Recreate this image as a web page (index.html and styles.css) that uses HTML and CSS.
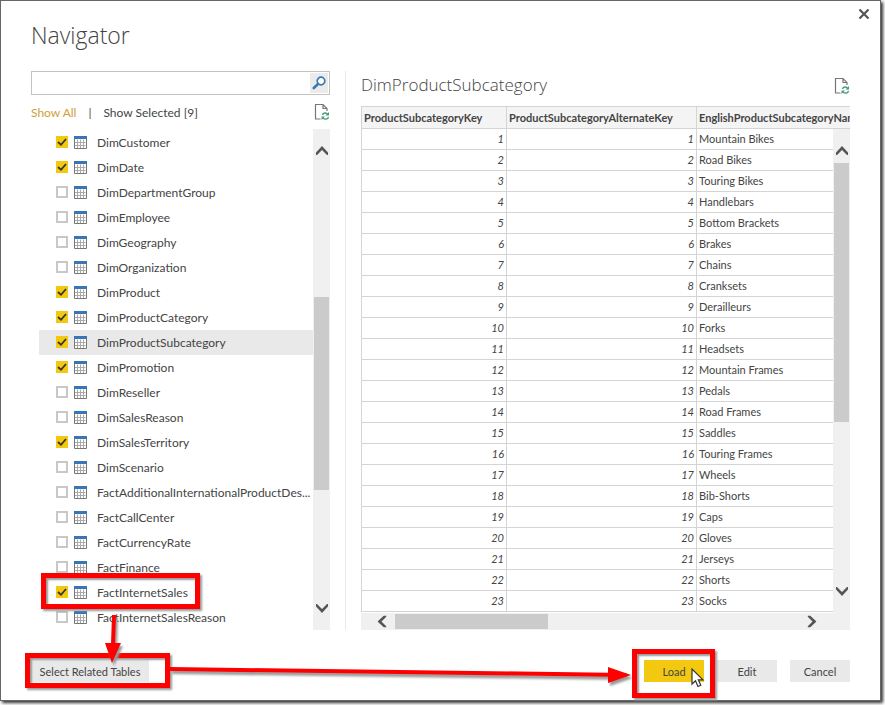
FILE: index.html
```
<!DOCTYPE html>
<html lang="en">
<head>
    <meta charset="UTF-8">
    <meta name="viewport" content="width=device-width, initial-scale=1.0">
    <title>Navigator</title>
    <link rel="stylesheet" href="styles.css">
</head>
<body>
    <!-- Shared icons -->
    <svg class="sprite" aria-hidden="true">
        <symbol id="icon-table" viewBox="0 0 13 13">
            <path d="M0 0h13v13H0z" fill="#fff"/>
            <path d="M4 3v9M7 3v9M10 3v9M1 6h11M1 9h11" transform="translate(-.5 .5)" fill="none" stroke="#aaa"/>
            <path d="M.5 2v10.500h12V2" fill="none" stroke="#777"/>
            <path d="M0 0h13v3H0z" fill="#3a75b5"/>
        </symbol>
        <symbol id="icon-refresh" viewBox="0 0 16 18">
            <path d="M6.500 16H1.500V1.500H9L13 5.500V8M9 1.500V5.500H13" fill="none" stroke="#777" stroke-width="1.200"/>
            <path d="M8.500 12C9 9.600 12.500 9.300 13.600 11.300M14.500 13.800C14 16.500 10.500 16.800 9 14.800" fill="none" stroke="#4a9c78" stroke-width="1.400"/>
            <path d="M15 9v3.500h-3.500zM7.500 17v-3.500H11z" fill="#4a9c78"/>
        </symbol>
        <symbol id="icon-chevron" viewBox="0 0 12 9">
            <path d="M0 6.500 6 0l6 6.500V9h-1L6 4 1 9H0z" fill="#555"/>
        </symbol>
    </svg>

    <main class="dialog">
        <button class="close-btn" type="button" aria-label="Close">
            <svg width="12" height="12" viewBox="0 0 12 12"><path d="M1.500 1.500l9 9M10.500 1.500l-9 9" stroke="#555" stroke-width="2.200"/></svg>
        </button>
        <h1>Navigator</h1>

        <div class="content">
            <section class="sidebar">
                <div class="search">
                    <input type="text" aria-label="Search">
                    <button type="button" aria-label="Search">
                        <svg width="14" height="14" viewBox="0 0 14 14"><circle cx="9" cy="5" r="3.800" fill="#fff" stroke="#3c78b8" stroke-width="1.700"/><path d="M6 8L1.800 12" stroke="#3c78b8" stroke-width="2.600" stroke-linecap="round"/></svg>
                    </button>
                </div>
                <div class="filters">
                    <a class="active" href="#">Show All</a>
                    <span class="bar">|</span>
                    <a href="#">Show Selected [9]</a>
                    <button class="icon-btn" type="button" aria-label="Refresh"><svg width="16" height="18"><use href="#icon-refresh"/></svg></button>
                </div>
                <div class="tree">
                    <ul id="tableList"></ul>
                    <div class="scroll-v">
                        <svg class="up" width="12" height="9"><use href="#icon-chevron"/></svg>
                        <div class="thumb"></div>
                        <svg class="down" width="12" height="9"><use href="#icon-chevron"/></svg>
                    </div>
                </div>
            </section>

            <section class="preview">
                <div class="preview-header">
                    <h2>DimProductSubcategory</h2>
                    <button class="icon-btn" type="button" aria-label="Refresh preview"><svg width="16" height="18"><use href="#icon-refresh"/></svg></button>
                </div>
                <div class="grid">
                    <table>
                        <colgroup><col class="key"><col class="alt"><col></colgroup>
                        <thead>
                            <tr><th>ProductSubcategoryKey</th><th>ProductSubcategoryAlternateKey</th><th>EnglishProductSubcategoryName</th></tr>
                        </thead>
                        <tbody id="previewRows"></tbody>
                    </table>
                    <div class="scroll-v">
                        <svg class="up" width="12" height="9"><use href="#icon-chevron"/></svg>
                        <div class="thumb"></div>
                        <svg class="down" width="12" height="9"><use href="#icon-chevron"/></svg>
                    </div>
                </div>
                <div class="scroll-h">
                    <svg class="left" width="12" height="9"><use href="#icon-chevron"/></svg>
                    <div class="thumb"></div>
                    <svg class="right" width="12" height="9"><use href="#icon-chevron"/></svg>
                </div>
            </section>
        </div>

        <footer>
            <div class="marked marked-select">
                <button type="button">Select Related Tables</button>
            </div>
            <svg class="arrow-right" height="20">
                <line x1="0" y1="8" x2="99%" y2="14"/>
                <svg x="100%" y="14" class="head"><path d="M0 0L-23-8V8z"/></svg>
            </svg>
            <div class="marked marked-load">
                <button class="primary" type="button">Load</button>
                <svg class="cursor" width="14" height="20" viewBox="0 0 14 20"><path d="M1 1v15l3.500-3.300L7 18.500l2.800-1.200-2.500-5.500H12z" fill="#fff" stroke="#333" stroke-width="1.200"/></svg>
            </div>
            <button type="button">Edit</button>
            <button type="button">Cancel</button>
        </footer>
    </main>

    <script src="main.js"></script>
</body>
</html>
```
FILE: styles.css
```
:root {
    --text: #444;
    --line: #d4d4d4;
    --track: #f0f0f0;
    --thumb: #cbcbcb;
    --button: #e9e9e9;
    --yellow: #f2c811;
    --red: #fe0000;
}

* {
    margin: 0;
    padding: 0;
    box-sizing: border-box;
}

body {
    font-family: Lato, "Open Sans", sans-serif;
    font-size: 12px;
    color: var(--text);
    background: #fff;
    padding: 0 4px 5px 0;
}

h1,
h2 {
    font-family: "Open Sans", sans-serif;
    font-weight: 300;
}

button {
    font: inherit;
    color: inherit;
    border: 0;
    background: none;
}

a {
    color: inherit;
    text-decoration: none;
}

.sprite {
    position: absolute;
    width: 0;
    height: 0;
}

.dialog {
    position: relative;
    padding: 20px 30px 18px;
    background: #fff;
    border: 1px solid #666;
    box-shadow: 2px 2px 3px #333;
}

.close-btn {
    position: absolute;
    top: 7px;
    right: 10px;
    width: 12px;
    height: 12px;
    display: grid;
    place-items: center;
}

h1 {
    font-size: 23px;
    line-height: 28px;
    margin-bottom: 22px;
}

.content {
    display: flex;
}

.sidebar {
    flex: 0 0 315px;
    min-width: 0;
    padding-right: 15px;
    border-right: 1px solid #e8e8e8;
}

.search {
    display: flex;
    height: 24px;
    border: 1px solid #c3c3c3;
    padding: 1px;
}

.search input {
    flex: 1;
    min-width: 0;
    border: 0;
    outline: 0;
    font: inherit;
}

.search button {
    width: 18px;
    display: grid;
    place-items: center;
    background: #ebebeb;
}

.filters {
    display: flex;
    align-items: center;
    height: 34px;
}

.filters .active {
    color: #d0a038;
}

.filters .bar {
    margin: 0 12px;
}

.icon-btn {
    width: 16px;
    height: 18px;
    margin-left: auto;
}

.icon-btn svg {
    display: block;
}

.tree {
    display: flex;
}

.tree ul {
    flex: 1;
    min-width: 0;
    margin-left: 8px;
    padding-top: 1px;
    list-style: none;
}

.tree li {
    position: relative;
    height: 25px;
    padding-left: 17px;
}

.tree li.selected {
    background: #e9e9e9;
}

.tree label {
    display: flex;
    align-items: center;
    height: 25px;
    padding-bottom: 1px;
}

.tree label span {
    white-space: nowrap;
}

.tree input {
    appearance: none;
    flex: none;
    width: 12px;
    height: 12px;
    border: 2px solid #c8c8c8;
    background: #fff;
}

.tree input:checked {
    border: 0;
    background: var(--yellow) url("data:image/svg+xml,%3Csvg xmlns='http://www.w3.org/2000/svg' viewBox='0 0 12 12'%3E%3Cpath d='M2 6l3 2.800L10 3' fill='none' stroke='%23333' stroke-width='1.800'/%3E%3C/svg%3E");
}

.tree label svg {
    flex: none;
    margin: 0 10px 0 6px;
}

.scroll-v {
    flex: none;
    width: 17px;
    background: var(--track);
    display: flex;
    flex-direction: column;
    align-items: center;
    padding: 17px 0;
}

.scroll-v .thumb {
    width: 15px;
    background: var(--thumb);
}

.tree .thumb {
    height: 193px;
    margin: 142px 0 auto;
}

.down {
    transform: rotate(180deg);
}

.preview {
    flex: 1;
    min-width: 0;
    padding-left: 15px;
}

.preview-header {
    display: flex;
    align-items: center;
    height: 35px;
    padding-bottom: 5px;
}

h2 {
    font-size: 17px;
    padding-bottom: 3px;
}

.grid {
    position: relative;
    overflow: hidden;
    padding-bottom: 1px;
}

table {
    width: 100%;
    table-layout: fixed;
    border-collapse: collapse;
    font-size: 11px;
}

.key {
    width: 145px;
}

.alt {
    width: 190px;
}

th,
td {
    height: 21px;
    padding: 0 2px;
    line-height: 18px;
    border: 1px solid var(--line);
    white-space: nowrap;
    overflow: hidden;
}

th {
    height: 22px;
    text-align: left;
    background: #f4f4f4;
}

th:last-child,
td:last-child {
    border-right: 0;
}

.num {
    text-align: right;
    font-style: italic;
}

.grid .scroll-v {
    position: absolute;
    top: 23px;
    right: 0;
    bottom: 0;
}

.grid .thumb {
    height: 259px;
    margin: 8px 0 auto;
}

.scroll-h {
    display: flex;
    align-items: center;
    height: 17px;
    padding: 0 32px 0 15px;
    background: var(--track);
}

.scroll-h .thumb {
    width: 153px;
    height: 15px;
    margin: 0 auto 0 7px;
    background: var(--thumb);
}

.left {
    transform: rotate(-90deg);
}

.right {
    transform: rotate(90deg);
}

footer {
    display: flex;
    align-items: center;
    margin-top: 30px;
    font-size: 11px;
}

footer button {
    width: 60px;
    height: 22px;
    margin-left: 13px;
    background: var(--button);
}

footer .marked button {
    margin-left: 0;
}

footer .marked-select button {
    width: 118px;
}

footer .primary {
    background: var(--yellow);
}

/* Red call-outs */
.marked {
    position: relative;
}

.marked::after {
    content: "";
    position: absolute;
    border: 5px solid var(--red);
    box-shadow: 2px 2px 2px #999, inset 2px 2px 2px #999;
    pointer-events: none;
}

.tree .marked {
    z-index: 1;
}

.tree .marked::after {
    inset: -7px 113px -4px 2px;
}

.marked-select::after {
    inset: -7px -21px -6px -6px;
}

.marked-load::after {
    inset: -11px -11px -16px -12px;
}

.arrow-down {
    position: absolute;
    top: 26px;
    left: 61px;
    z-index: 2;
}

.arrow-down,
.arrow-right {
    overflow: visible;
    fill: var(--red);
    stroke: var(--red);
    stroke-width: 4;
    filter: drop-shadow(2px 3px 1px #999);
}

.arrow-right {
    flex: 1;
    min-width: 0;
    margin: 0 13px 0 21px;
}

.arrow-right .head {
    overflow: visible;
    stroke: none;
}

.cursor {
    position: absolute;
    top: 8px;
    left: 47px;
    z-index: 1;
}
```
FILE: main.js
```
const tables = [
    ['DimCustomer', true],
    ['DimDate', true],
    ['DimDepartmentGroup', false],
    ['DimEmployee', false],
    ['DimGeography', false],
    ['DimOrganization', false],
    ['DimProduct', true],
    ['DimProductCategory', true],
    ['DimProductSubcategory', true],
    ['DimPromotion', true],
    ['DimReseller', false],
    ['DimSalesReason', false],
    ['DimSalesTerritory', true],
    ['DimScenario', false],
    ['FactAdditionalInternationalProductDes...', false],
    ['FactCallCenter', false],
    ['FactCurrencyRate', false],
    ['FactFinance', false],
    ['FactInternetSales', true],
    ['FactInternetSalesReason', false]
];

const subcategories = [
    'Mountain Bikes', 'Road Bikes', 'Touring Bikes', 'Handlebars', 'Bottom Brackets',
    'Brakes', 'Chains', 'Cranksets', 'Derailleurs', 'Forks', 'Headsets',
    'Mountain Frames', 'Pedals', 'Road Frames', 'Saddles', 'Touring Frames',
    'Wheels', 'Bib-Shorts', 'Caps', 'Gloves', 'Jerseys', 'Shorts', 'Socks'
];

const arrow = '<svg class="arrow-down" width="20" height="56"><path d="M14 9L13 38" fill="none"/><path d="M5 37h16L12 57z" stroke="none"/></svg>';

document.getElementById('tableList').innerHTML = tables.map(([name, checked]) => {
    const isMarked = name === 'FactInternetSales';
    const cls = isMarked ? 'marked' : name === 'DimProductSubcategory' ? 'selected' : '';
    return `<li class="${cls}">
        <label>
            <input type="checkbox"${checked ? ' checked' : ''}>
            <svg width="13" height="13"><use href="#icon-table"/></svg>
            <span>${name}</span>
        </label>${isMarked ? arrow : ''}
    </li>`;
}).join('');

document.getElementById('previewRows').innerHTML = subcategories.map((name, i) =>
    `<tr><td class="num">${i + 1}</td><td class="num">${i + 1}</td><td>${name}</td></tr>`
).join('');
```
